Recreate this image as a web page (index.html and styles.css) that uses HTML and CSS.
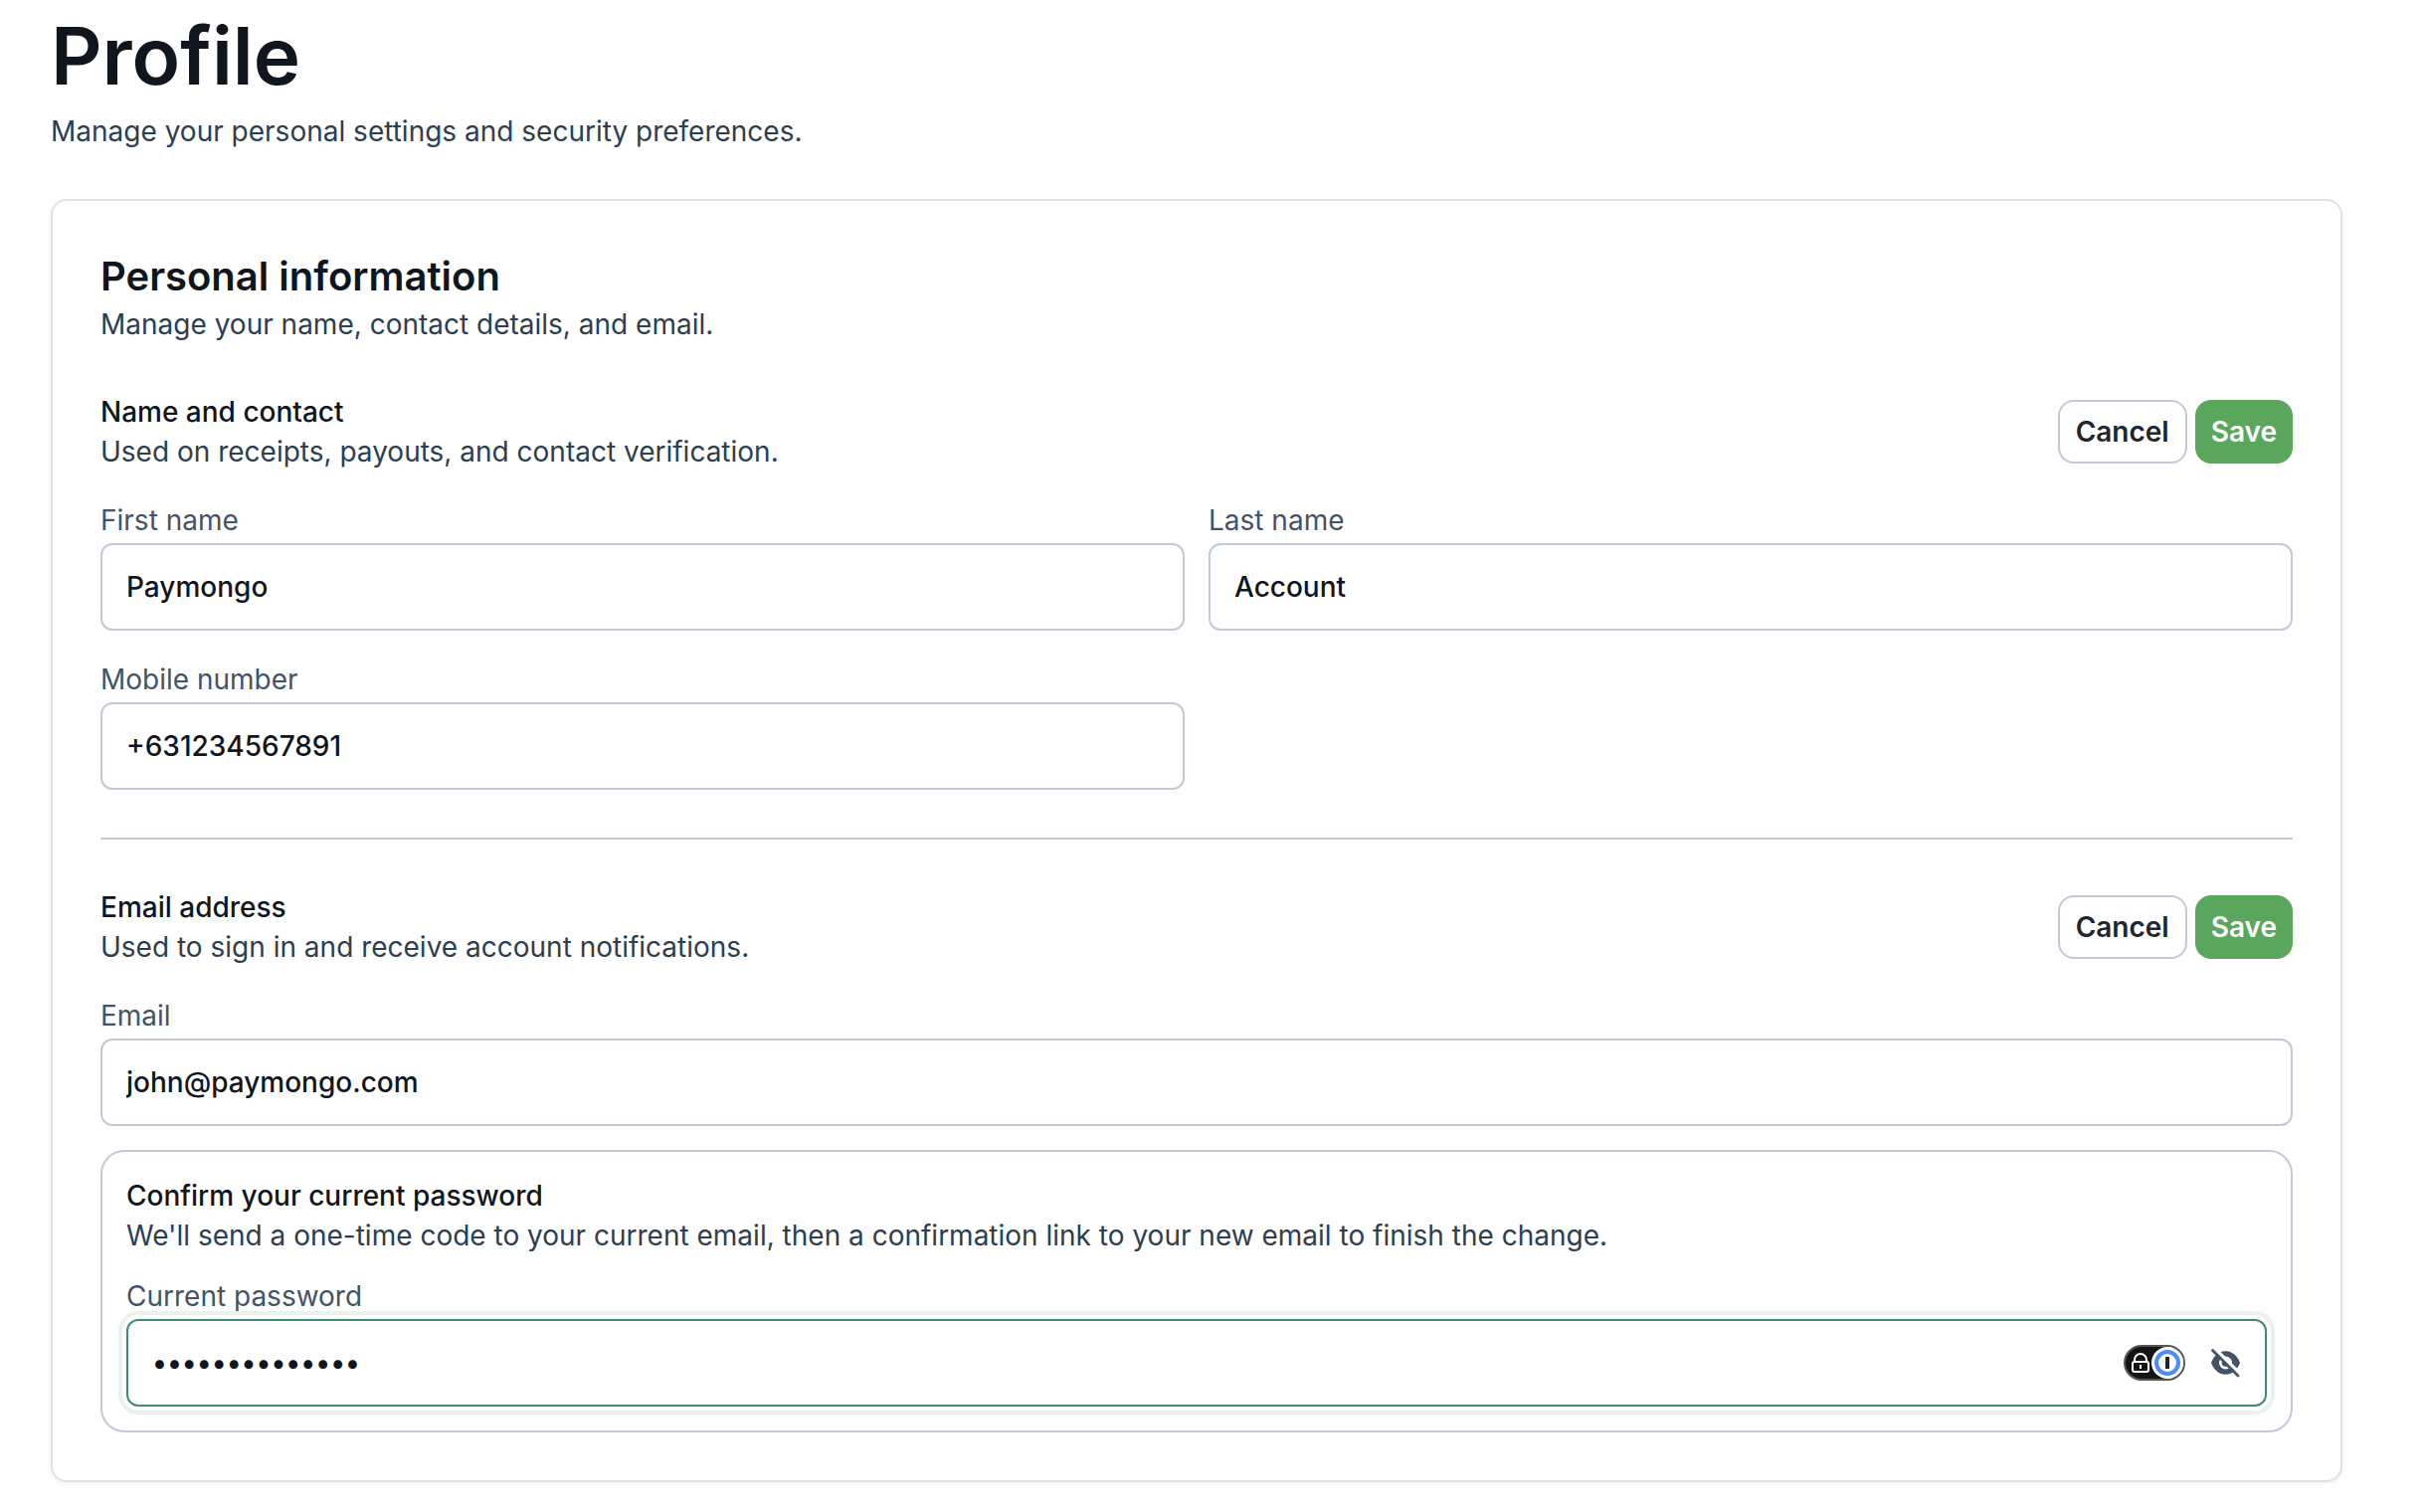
FILE: index.html
```html
<!DOCTYPE html>
<html lang="en">
<head>
    <title>Profile</title>
    <meta charset="UTF-8">
    <meta name="viewport" content="width=device-width, initial-scale=1.0">
    <link rel="stylesheet" href="styles.css">
</head>
<body>
    <main class="page">
        <header class="page-header">
            <h1>Profile</h1>
            <p>Manage your personal settings and security preferences.</p>
        </header>

        <section class="card">
            <div class="card-header">
                <h2>Personal information</h2>
                <p>Manage your name, contact details, and email.</p>
            </div>

            <form class="section">
                <div class="section-header">
                    <div>
                        <h3>Name and contact</h3>
                        <p>Used on receipts, payouts, and contact verification.</p>
                    </div>
                    <div class="actions">
                        <button type="button" class="btn">Cancel</button>
                        <button type="submit" class="btn btn-primary">Save</button>
                    </div>
                </div>
                <div class="fields">
                    <div class="field">
                        <label for="first-name">First name</label>
                        <input type="text" id="first-name" class="input" value="Paymongo">
                    </div>
                    <div class="field">
                        <label for="last-name">Last name</label>
                        <input type="text" id="last-name" class="input" value="Account">
                    </div>
                    <div class="field">
                        <label for="mobile">Mobile number</label>
                        <input type="tel" id="mobile" class="input" value="+631234567891">
                    </div>
                </div>
            </form>

            <hr class="divider">

            <form class="section">
                <div class="section-header">
                    <div>
                        <h3>Email address</h3>
                        <p>Used to sign in and receive account notifications.</p>
                    </div>
                    <div class="actions">
                        <button type="button" class="btn">Cancel</button>
                        <button type="submit" class="btn btn-primary">Save</button>
                    </div>
                </div>
                <div class="field">
                    <label for="email">Email</label>
                    <input type="email" id="email" class="input" value="john@paymongo.com">
                </div>
                <div class="confirm">
                    <div>
                        <h3>Confirm your current password</h3>
                        <p>We'll send a one-time code to your current email, then a confirmation link to your new email to finish the change.</p>
                    </div>
                    <div class="field">
                        <label for="password">Current password</label>
                        <div class="input password active">
                            <input type="password" id="password" value="12345678901234">
                            <button type="button" class="icon-btn" aria-label="Password manager">
                                <svg width="62" height="36" viewBox="0 0 62 36">
                                    <rect x="1" y="1" width="60" height="34" rx="17" fill="#141414" stroke="#555" stroke-width="2"/>
                                    <path d="M44 2a16 16 0 0 1 0 32z" fill="#fff"/>
                                    <circle cx="44" cy="18" r="16" fill="#fff"/>
                                    <circle cx="44" cy="18" r="11" fill="#fff" stroke="#4a8cff" stroke-width="4"/>
                                    <rect x="42" y="12" width="4" height="12" fill="#222"/>
                                    <path d="M11 17v-2a6 6 0 0 1 12 0v2" fill="none" stroke="#fff" stroke-width="2"/>
                                    <rect x="9" y="17" width="16" height="10" rx="2" fill="#141414" stroke="#fff" stroke-width="2"/>
                                    <rect x="16" y="20" width="2" height="4" fill="#fff"/>
                                </svg>
                            </button>
                            <button type="button" class="icon-btn" aria-label="Show password">
                                <svg width="32" height="32" viewBox="0 0 32 32">
                                    <path d="M2 16C4.500 9 10 4.200 16.500 4.200S28.500 9 31 16C28.500 23 23 27.800 16.500 27.800S4.500 23 2 16z" fill="#425466"/>
                                    <circle cx="16.500" cy="16" r="6.500" fill="#fff"/>
                                    <circle cx="16.500" cy="16" r="3.800" fill="#425466"/>
                                    <path d="M5 1l26 26" stroke="#fff" stroke-width="3.500"/>
                                    <path d="M3.500 3.500l25.500 25.500" stroke="#425466" stroke-width="2.800" stroke-linecap="round"/>
                                </svg>
                            </button>
                        </div>
                    </div>
                </div>
            </form>
        </section>
    </main>
</body>
</html>
```
FILE: styles.css
```css
* {
    box-sizing: border-box;
}
body {
    margin: 0;
    background-color: #fff;
    color: #2d3e4f;
    font-family: Inter, sans-serif;
    font-size: 28px;
    line-height: 40px;
}
h1, h2, h3, p {
    margin: 0;
}
h1, h2, h3 {
    color: #10161e;
}
h1 {
    font-size: 80px;
    font-weight: 600;
    line-height: 96px;
}
h2 {
    font-size: 40px;
    font-weight: 600;
    line-height: 56px;
}
h3 {
    font-size: 28px;
    font-weight: 500;
}
.page {
    padding: 8px 83px 28px 51px;
}
.page-header {
    display: flex;
    flex-direction: column;
    gap: 8px;
    margin-bottom: 48px;
}
.card {
    padding: 48px;
    border: 2px solid #dde2e7;
    border-radius: 16px;
    box-shadow: 0 2px 4px rgba(0, 0, 0, 0.05);
}
.card-header {
    margin-bottom: 48px;
}
.section {
    display: flex;
    flex-direction: column;
    gap: 24px;
}
.section-header {
    display: flex;
    justify-content: space-between;
    align-items: center;
}
.actions {
    display: flex;
    gap: 8px;
}
.btn {
    height: 64px;
    padding: 0 16px;
    border: 2px solid #c1cad6;
    border-radius: 16px;
    background-color: #fff;
    color: #20262e;
    font: inherit;
    font-weight: 600;
    cursor: pointer;
}
.btn-primary {
    border: 0;
    background-color: #59a65c;
    color: #fff;
}
.fields {
    display: grid;
    grid-template-columns: 1fr 1fr;
    gap: 24px;
}
.field {
    display: flex;
    flex-direction: column;
}
.field label {
    padding-top: 2px;
    color: #425466;
    line-height: 46px;
}
.input {
    width: 100%;
    height: 88px;
    padding: 0 24px;
    border: 2px solid #c1cad6;
    border-radius: 12px;
    background-color: #fff;
    color: #10161e;
    font: inherit;
    font-weight: 500;
}
.divider {
    width: 100%;
    margin: 48px 0;
    border: 0;
    border-top: 2px solid #c1cad6;
}
.confirm {
    display: flex;
    flex-direction: column;
    gap: 16px;
    padding: 24px;
    border: 2px solid #c1cad6;
    border-radius: 24px;
}
.password {
    display: flex;
    align-items: center;
    gap: 24px;
}
.password input {
    flex: 1;
    min-width: 0;
    padding: 0;
    border: 0;
    outline: 0;
    background: none;
    color: inherit;
    font: inherit;
}
.active {
    border-color: #428c71;
    box-shadow: 0 0 0 4px #fff, 0 0 0 8px #e9f3e9;
}
.icon-btn {
    display: flex;
    padding: 0;
    border: 0;
    background: none;
    cursor: pointer;
}
```
